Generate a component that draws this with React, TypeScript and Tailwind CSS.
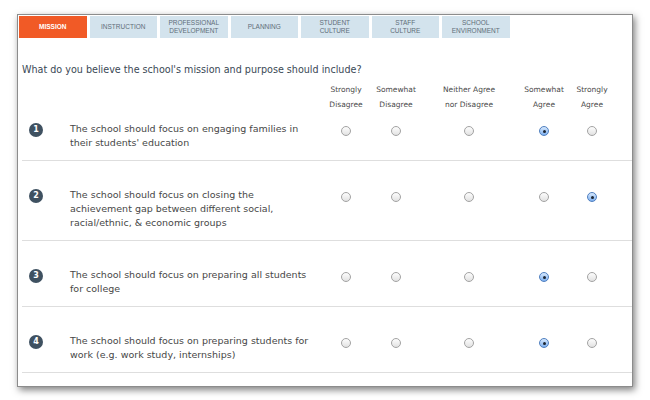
import React from 'react';

const tabs = [
  ['MISSION'],
  ['INSTRUCTION'],
  ['PROFESSIONAL', 'DEVELOPMENT'],
  ['PLANNING'],
  ['STUDENT', 'CULTURE'],
  ['STAFF', 'CULTURE'],
  ['SCHOOL', 'ENVIRONMENT'],
];

const columns = [
  { lines: ['Strongly', 'Disagree'], w: 'w-[50px]' },
  { lines: ['Somewhat', 'Disagree'], w: 'w-[50px]' },
  { lines: ['Neither Agree', 'nor Disagree'], w: 'w-[96px]' },
  { lines: ['Somewhat', 'Agree'], w: 'w-[54px]' },
  { lines: ['Strongly', 'Agree'], w: 'w-[42px]' },
];

const questions = [
  { lines: ['The school should focus on engaging families in', "their students' education"], answer: 3 },
  {
    lines: ['The school should focus on closing the', 'achievement gap between different social,', 'racial/ethnic, & economic groups'],
    answer: 4,
  },
  { lines: ['The school should focus on preparing all students', 'for college'], answer: 3 },
  { lines: ['The school should focus on preparing students for', 'work (e.g. work study, internships)'], answer: 3 },
];

function Radio({ checked }: { checked: boolean }) {
  if (checked) {
    return (
      <span className="mt-[4px] flex h-[10px] w-[10px] items-center justify-center rounded-full border border-[#4f7fc0] bg-linear-to-b from-[#d6e8fd] to-[#7eb0ef]">
        <span className="h-[3px] w-[3px] rounded-full bg-[#1b2430]" />
      </span>
    );
  }
  return (
    <span className="mt-[4px] block h-[10px] w-[10px] rounded-full border border-[#a3a3a3] bg-linear-to-b from-[#fdfdfd] to-[#e2e2e2]" />
  );
}

export default function App() {
  return (
    <div className="h-[400px] w-[650px] bg-white pt-[14px] pl-[17px]">
      <div className="h-[373px] w-[616px] border border-[#8c8c8c] bg-white shadow-[2px_3px_7px_rgba(0,0,0,0.5)]">
        {/* tabs */}
        <div className="mt-[1px] ml-[1px] flex gap-[3px] font-['Liberation_Sans',Arial,sans-serif]">
          {tabs.map((t, i) => (
            <div
              key={i}
              className={
                'flex h-[22px] w-[67.5px] flex-col items-center justify-center text-center text-[6.5px] leading-[8px] ' +
                (i === 0 ? 'bg-[#f15a26] font-bold text-white' : 'bg-[#d3e3ed] text-[#5f6e79]')
              }
            >
              {t.map((l) => (
                <span key={l}>{l}</span>
              ))}
            </div>
          ))}
        </div>

        <div className="ml-[4px] font-['DejaVu_Sans',Verdana,sans-serif]">
          <p className="mt-[26px] text-[9.6px] leading-[12px] text-[#3a4855]">
            What do you believe the school's mission and purpose should include?
          </p>

          {/* column headers */}
          <div className="mt-[6px] flex text-[7.5px] leading-[15px] text-[#4a4a4a]">
            <div className="w-[299px]" />
            {columns.map((c, i) => (
              <div key={i} className={c.w + ' flex flex-col items-center whitespace-nowrap'}>
                {c.lines.map((l) => (
                  <span key={l}>{l}</span>
                ))}
              </div>
            ))}
          </div>

          {questions.map((q, qi) => (
            <div
              key={qi}
              className={
                'flex border-b border-[#dedede] pb-[10px] ' + (qi === 0 ? 'pt-[10px]' : 'pt-[27px]')
              }
            >
              <div className="flex w-[299px]">
                <span className="mt-[1px] ml-[7px] flex h-[14px] w-[14px] items-center justify-center rounded-full bg-[#3f5161] text-[8px] font-bold text-white">
                  {qi + 1}
                </span>
                <div className="ml-[27px] whitespace-nowrap text-[9.5px] leading-[14px] text-[#474747]">
                  {q.lines.map((l) => (
                    <div key={l}>{l}</div>
                  ))}
                </div>
              </div>
              {columns.map((c, ci) => (
                <div key={ci} className={c.w + ' flex justify-center'}>
                  <Radio checked={q.answer === ci} />
                </div>
              ))}
            </div>
          ))}
        </div>
      </div>
    </div>
  );
}
